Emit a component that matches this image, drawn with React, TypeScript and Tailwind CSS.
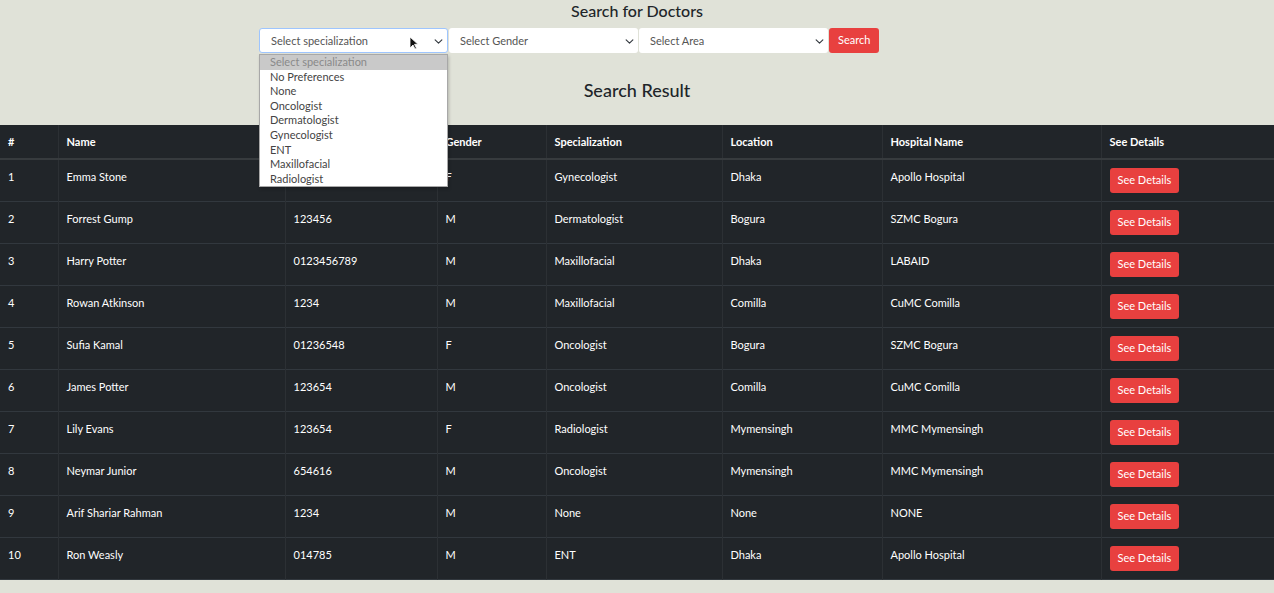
const doctors = [
  { id: 1, name: "Emma Stone", phone: "", gender: "F", spec: "Gynecologist", loc: "Dhaka", hosp: "Apollo Hospital" },
  { id: 2, name: "Forrest Gump", phone: "123456", gender: "M", spec: "Dermatologist", loc: "Bogura", hosp: "SZMC Bogura" },
  { id: 3, name: "Harry Potter", phone: "0123456789", gender: "M", spec: "Maxillofacial", loc: "Dhaka", hosp: "LABAID" },
  { id: 4, name: "Rowan Atkinson", phone: "1234", gender: "M", spec: "Maxillofacial", loc: "Comilla", hosp: "CuMC Comilla" },
  { id: 5, name: "Sufia Kamal", phone: "01236548", gender: "F", spec: "Oncologist", loc: "Bogura", hosp: "SZMC Bogura" },
  { id: 6, name: "James Potter", phone: "123654", gender: "M", spec: "Oncologist", loc: "Comilla", hosp: "CuMC Comilla" },
  { id: 7, name: "Lily Evans", phone: "123654", gender: "F", spec: "Radiologist", loc: "Mymensingh", hosp: "MMC Mymensingh" },
  { id: 8, name: "Neymar Junior", phone: "654616", gender: "M", spec: "Oncologist", loc: "Mymensingh", hosp: "MMC Mymensingh" },
  { id: 9, name: "Arif Shariar Rahman", phone: "1234", gender: "M", spec: "None", loc: "None", hosp: "NONE" },
  { id: 10, name: "Ron Weasly", phone: "014785", gender: "M", spec: "ENT", loc: "Dhaka", hosp: "Apollo Hospital" },
]

const options = ["No Preferences", "None", "Oncologist", "Dermatologist", "Gynecologist", "ENT", "Maxillofacial", "Radiologist"]

const Chevron = () => (
  <svg width="9" height="9" viewBox="0 0 16 16" className="shrink-0">
    <path d="M2 5l6 6 6-6" fill="none" stroke="#343a40" strokeWidth="2" strokeLinecap="round" strokeLinejoin="round" />
  </svg>
)

const FakeSelect = ({ label, focused }: { label: string; focused?: boolean }) => (
  <div
    className={
      "w-[189px] h-[25px] bg-white flex items-center justify-between pl-[11px] pr-[4px] pt-[1px] text-[11px] text-[#555] rounded-[3px] " +
      (focused ? "border border-[#9ec5fe]" : "")
    }
  >
    <span>{label}</span>
    <Chevron />
  </div>
)

export default function App() {
  return (
    <div className="min-h-[593px] bg-[#e0e2d8] text-[#212529] font-['Lato','Liberation_Sans',sans-serif]">
      <h2 className="text-center text-[16px] font-medium pt-[1px] leading-[20px]">Search for Doctors</h2>
      <div className="flex items-center gap-[1px] mt-[7px] pl-[259px]">
        <div className="relative">
          <FakeSelect label="Select specialization" focused />
          <svg width="10" height="14" viewBox="0 0 10 14" className="absolute left-[150px] top-[8px]">
            <path d="M1 1v11l3-3 2 4 1.5-.7-2-4H9z" fill="#111" stroke="#fff" strokeWidth="0.8" />
          </svg>
          <div className="absolute left-0 top-[26px] w-[189px] bg-white border border-[#a8a8a8] shadow-[1px_2px_3px_rgba(0,0,0,0.2)] z-10 text-[11px] leading-[14.6px]">
            <div className="bg-[#c9c9c9] text-[#8a8a8a] pl-[10px]">Select specialization</div>
            {options.map((o) => (
              <div key={o} className="pl-[10px] text-[#444]">{o}</div>
            ))}
          </div>
        </div>
        <FakeSelect label="Select Gender" />
        <FakeSelect label="Select Area" />
        <button className="h-[25px] px-[9px] bg-[#e8403f] text-white text-[11px] rounded-[3px]">Search</button>
      </div>
      <h3 className="text-center text-[18px] font-medium mt-[26px] leading-[22px]">Search Result</h3>
      <table className="w-full mt-[24px] bg-[#212529] text-white text-[11px] border-collapse table-fixed">
        <colgroup>
          <col className="w-[58px]" />
          <col className="w-[227px]" />
          <col className="w-[152px]" />
          <col className="w-[109px]" />
          <col className="w-[176px]" />
          <col className="w-[160px]" />
          <col className="w-[219px]" />
          <col />
        </colgroup>
        <thead>
          <tr className="border-b-[2px] border-[#373b3e] font-bold">
            {["#", "Name", "", "Gender", "Specialization", "Location", "Hospital Name", "See Details"].map((h, i) => (
              <th key={i} className="text-left px-2 py-2 leading-[17px] border-r border-[#2c3034] last:border-r-0">{h}</th>
            ))}
          </tr>
        </thead>
        <tbody>
          {doctors.map((d) => (
            <tr key={d.id} className="border-b border-[#32383e] align-top">
              <td className="px-2 py-2 leading-[17px] border-r border-[#2c3034]">{d.id}</td>
              <td className="px-2 py-2 leading-[17px] border-r border-[#2c3034]">{d.name}</td>
              <td className="px-2 py-2 leading-[17px] border-r border-[#2c3034]">{d.phone}</td>
              <td className="px-2 py-2 leading-[17px] border-r border-[#2c3034]">{d.gender}</td>
              <td className="px-2 py-2 leading-[17px] border-r border-[#2c3034]">{d.spec}</td>
              <td className="px-2 py-2 leading-[17px] border-r border-[#2c3034]">{d.loc}</td>
              <td className="px-2 py-2 leading-[17px] border-r border-[#2c3034]">{d.hosp}</td>
              <td className="px-2 py-2">
                <button className="h-[25px] px-[8px] bg-[#e8403f] text-white text-[11px] rounded-[3px]">See Details</button>
              </td>
            </tr>
          ))}
        </tbody>
      </table>
    </div>
  )
}
